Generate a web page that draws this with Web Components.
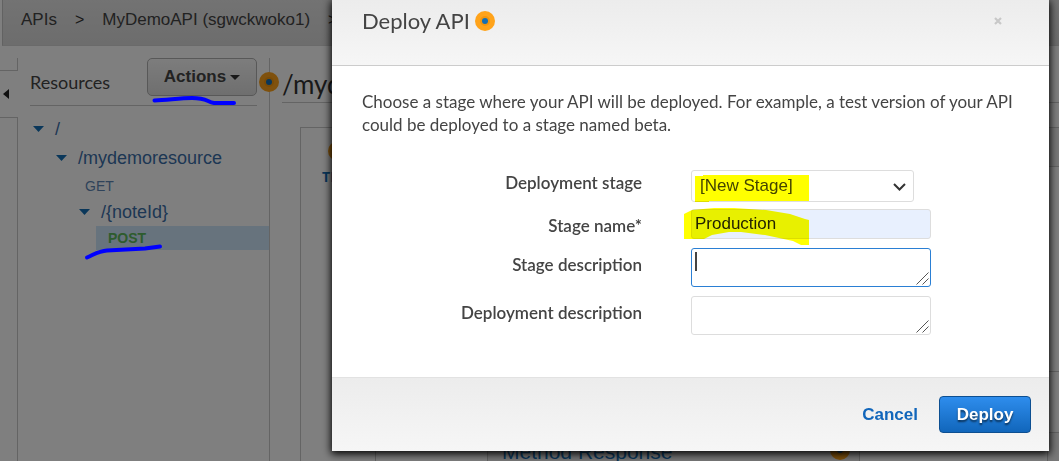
<!DOCTYPE html>
<html lang="en">
<head>
<meta charset="utf-8">
<title>Deploy API</title>
<style>
  html, body { margin: 0; height: 100%; }
  body { overflow: hidden; background: #fff; color: #444; font-family: "Liberation Sans", Arial, sans-serif; }
</style>
</head>
<body>
<api-console></api-console>
<script>
const define = (name, html) => {
  const tpl = document.createElement('template');
  tpl.innerHTML = html;
  customElements.define(name, class extends HTMLElement {
    constructor() {
      super();
      this.attachShadow({ mode: 'open' }).append(tpl.content.cloneNode(true));
    }
  });
};

/* Orange hint dot with a blue core */
define('hint-pulse', `
<style>
  :host { display: inline-block; width: 20px; height: 20px; }
  svg { display: block; }
</style>
<svg width="20" height="20" viewBox="0 0 20 20" aria-hidden="true">
  <circle cx="10" cy="10" r="10" fill="#ffa31a"/>
  <circle cx="10" cy="10" r="5" fill="#f2960f"/>
  <circle cx="10" cy="10" r="3" fill="#146eb4"/>
</svg>`);

define('bread-crumbs', `
<style>
  :host { display: block; }
  nav { display: flex; align-items: center; gap: 18px; height: 46px; box-sizing: border-box;
    margin-left: 2px; padding: 0 0 5px 18px; border-left: 1px solid #c4c4c4; border-bottom: 1px solid #d4d4d4;
    background: linear-gradient(#e6e6e6, #dadada); font-size: 17px; white-space: nowrap; }
  a { color: #444; text-decoration: none; }
  span { font-size: 16px; color: #333; }
</style>
<nav><a href="#apis">APIs</a><span>&gt;</span><a href="#api">MyDemoAPI (sgwckwoko1)</a><span>&gt;</span></nav>`);

define('side-rail', `
<style>
  :host { display: flex; flex-direction: column; width: 18px; flex: none; }
  .top { height: 12px; margin-top: 12px; border: solid #c8c8c8; border-width: 0 1px 1px 0; }
  button { height: 46px; padding: 0 0 0 3px; border: 0; background: none; text-align: left; }
  svg { display: block; }
  .rest { flex: 1; border: solid #c8c8c8; border-width: 1px 1px 0 0; }
</style>
<div class="top"></div>
<button aria-label="Collapse"><svg width="6" height="10" viewBox="0 0 6 10"><path d="M6 0v10L0 5z" fill="#222"/></svg></button>
<div class="rest"></div>`);

/* One line of the resource tree */
define('tree-item', `
<style>
  :host { display: flex; align-items: center; gap: 11px; height: 28px; font-size: 18px; color: #3b6ea8; }
  :host([verb]) { font-size: 14px; height: 24px; color: #5f87b5; }
  :host([selected]) { background: #cfe6fa; color: #5cb85c; font-weight: bold; }
  :host([verb]) svg { display: none; }
</style>
<svg width="11" height="6" viewBox="0 0 11 6" aria-hidden="true"><path d="M0 0h11L5.500 6z" fill="#146eb4"/></svg>
<slot></slot>`);

define('resource-panel', `
<style>
  :host { display: block; width: 239px; flex: none; margin: 12px 0 0 12px; border-right: 1px solid #c8c8c8; }
  header { display: flex; justify-content: space-between; height: 47px; margin-right: 12px; border-bottom: 1px solid #c8c8c8; }
  h2 { margin: 0; font: 18px/48px Lato, sans-serif; color: #444; }
  button { display: flex; align-items: center; justify-content: center; gap: 4px; width: 110px; height: 38px;
    border: 1px solid #b0b0b0; border-radius: 5px; background: linear-gradient(#fafafa, #dedede);
    font: bold 17px "Liberation Sans", sans-serif; color: #444; }
  .tree { padding-top: 9px; }
  .l1 { margin-left: 3px; } .l2 { margin: 1px 0 0 26px; } .l3 { margin-left: 49px; }
  .get { margin: 2px 0 0 55px; } .post { margin-left: 66px; padding-left: 12px; }
</style>
<header><h2>Resources</h2><button>Actions<svg width="10" height="5" viewBox="0 0 10 5"><path d="M0 0h10L5 5z" fill="#333"/></svg></button></header>
<div class="tree">
  <tree-item class="l1">/</tree-item>
  <tree-item class="l2">/mydemoresource</tree-item>
  <tree-item class="get" verb>GET</tree-item>
  <tree-item class="l3">/{noteId}</tree-item>
  <tree-item class="post" verb selected>POST</tree-item>
</div>`);

define('method-panel', `
<style>
  :host { display: flex; flex-direction: column; flex: 1; min-width: 0; position: relative; margin: 12px 0 0 12px; }
  .pin { position: absolute; left: -23px; top: 14px; }
  h1 { margin: 0; height: 44px; border-bottom: 1px solid #c8c8c8; font: 26px/52px Lato, sans-serif; color: #333; }
  .flow { display: grid; grid-template-columns: 76px 1fr; column-gap: 111px; flex: 1; margin: 24px 0 0 18px; }
  .client { border: solid #c8c8c8; border-width: 1px 1px 0; }
  .test { display: flex; flex-direction: column; width: 40px; gap: 6px; margin: 13px 0 0 17px; align-items: center;
    font: bold 14px "Open Sans", sans-serif; color: #146eb4; }
  .cols { display: flex; flex-direction: column; }
  .card { height: 243px; border: solid #c8c8c8; border-width: 1px 0 1px 1px; }
  .bar { height: 38px; background: #f0f0f0; border-bottom: 1px solid #c8c8c8; }
  .row { display: flex; justify-content: space-between; flex: 1; margin-top: 60px; }
  .box { display: flex; justify-content: space-between; width: 373px; box-sizing: border-box; padding: 7px 9px 0 14px; border: solid #c8c8c8; border-width: 1px 1px 0; background: #f0f0f0;
    font-size: 21px; color: #146eb4; }
  .end { width: 11px; border: solid #c8c8c8; border-width: 1px 0 0 1px; background: #f0f0f0; }
</style>
<hint-pulse class="pin"></hint-pulse>
<h1>/myd</h1>
<div class="flow">
  <div class="client"><div class="test"><hint-pulse></hint-pulse><span>TEST</span></div></div>
  <div class="cols">
    <div class="card"><div class="bar"></div></div>
    <div class="row"><div class="box">Method Response<hint-pulse></hint-pulse></div><div class="end"></div></div>
  </div>
</div>`);

define('deploy-dialog', `
<style>
  :host { position: fixed; inset: 0; display: flex; align-items: flex-start; padding: 0 10px 0 332px; background: rgba(0,0,0,.5); }
  section { flex: 1; background: #fff; color: #444; box-shadow: 0 2px 8px 1px #000; font-family: Lato, sans-serif; }
  header { display: flex; align-items: center; gap: 5px; height: 22px; padding: 10px 47px 33px 30px;
    border-bottom: 1px solid #ccc; background: linear-gradient(#ececec, #f6f6f6); }
  h2 { margin: 0; font-size: 22px; line-height: 22px; font-weight: normal; }
  .close { margin-left: auto; padding: 0; border: 0; background: none; height: 22px; }
  .close svg { display: block; }
  p { margin: 0; padding: 24px 30px 34px; font-size: 17px; line-height: 23px; }
  form { display: grid; grid-template-columns: 310px 240px; column-gap: 49px; padding-bottom: 42px; }
  label { text-align: right; font-size: 17px; line-height: 20px; font-weight: 600; padding-top: 3px; }
  .low { padding-top: 7px; }
  .field { position: relative; display: flex; height: 39px; }
  .tall { height: 48px; }
  input, select, textarea { box-sizing: border-box; margin: 0; width: 100%; border: 1px solid #ddd; border-radius: 3px;
    background: #fff; color: #444; font: 17px "Liberation Sans", sans-serif; outline: 0; }
  select { appearance: none; width: 223px; height: 32px; padding: 0 8px 2px; }
  input { height: 30px; padding: 0 3px; background: #e8f0fe; color: #222; }
  textarea { display: block; height: 39px; padding: 4px; resize: none; }
  .active { border-color: #2a7fd4; }
  .field svg { position: absolute; pointer-events: none; }
  .chev { left: 202px; top: 13px; }
  .grip { left: 225px; top: 24px; }
  .mark { mix-blend-mode: multiply; left: -7px; top: -1px; }
  .caret { position: absolute; left: 4px; top: 4px; width: 2px; height: 19px; background: #444; }
  footer { display: flex; justify-content: flex-end; align-items: center; gap: 21px; height: 73px; padding: 0 18px;
    border-top: 1px solid #e2e2e2; background: linear-gradient(#ececec, #f6f6f6); font: bold 17px "Liberation Sans", sans-serif; }
  a { color: #1166bb; text-decoration: none; }
  .deploy { width: 92px; height: 37px; border: 1px solid #0d4f91; border-radius: 4px; padding: 0; color: #fff; font: inherit;
    background: linear-gradient(#2e8ded, #1166bb); text-shadow: 0 2px 2px rgba(0,0,0,.6); }
</style>
<section role="dialog" aria-label="Deploy API">
  <header><h2>Deploy API</h2><hint-pulse></hint-pulse>
    <button class="close" aria-label="Close"><svg width="8" height="8" viewBox="0 0 8 8"><path d="M1 1l6 6M7 1l-6 6" stroke="#c8c8c8" stroke-width="2.200"/></svg></button></header>
  <p>Choose a stage where your API will be deployed. For example, a test version of your API could be deployed to a stage named beta.</p>
  <form>
    <label for="stage">Deployment stage</label>
    <div class="field"><select id="stage"><option>[New Stage]</option></select>
      <svg class="chev" width="13" height="8" viewBox="0 0 13 8"><path d="M1 1l5.500 5.500L12 1" fill="none" stroke="#333" stroke-width="2"/></svg>
      <svg class="mark" width="126" height="38" viewBox="0 0 126 38"><path d="M11 7h8v-1h106v26H25v1H11z" fill="#ff0"/></svg></div>
    <label class="low" for="name">Stage name*</label>
    <div class="field"><input id="name" value="Production">
      <svg class="mark" width="126" height="38" viewBox="0 0 126 38"><path d="M0 6l8-4 22-2h20l32 2 24 4 15 5 4 1v25h-8l-8-4-28-6-24-3H45l-17 3-8 4H0z" fill="#ff0"/></svg></div>
    <label class="low" for="sdesc">Stage description</label>
    <div class="field tall"><textarea id="sdesc" class="active"></textarea><span class="caret"></span>
      <svg class="grip" width="13" height="13" viewBox="0 0 13 13"><path d="M0.500 12.500l12-12M6.500 12.500l6-6" stroke="#555"/></svg></div>
    <label class="low" for="ddesc">Deployment description</label>
    <div class="field"><textarea id="ddesc"></textarea>
      <svg class="grip" width="13" height="13" viewBox="0 0 13 13"><path d="M0.500 12.500l12-12M6.500 12.500l6-6" stroke="#555"/></svg></div>
  </form>
  <footer><a href="#cancel">Cancel</a><button class="deploy">Deploy</button></footer>
</section>`);

/* Freehand blue underlines drawn over the page */
define('ink-layer', `
<style>
  :host { position: absolute; left: 0; top: 0; pointer-events: none; }
  svg { display: block; }
</style>
<svg width="270" height="270" viewBox="0 0 270 270" aria-hidden="true" fill="none" stroke="#00f" stroke-width="4" stroke-linecap="round" stroke-linejoin="round">
  <path d="M154.500 100.500C168 100 180 98 192 98C207 98 207 102 214 103H234"/>
  <path d="M87 257.500C95 254 99 251 107 250.500L145 248.500L160 246.500"/>
</svg>`);

define('api-console', `
<style>
  :host { display: flex; flex-direction: column; height: 100vh; }
  main { display: flex; flex: 1; min-height: 0; }
</style>
<bread-crumbs></bread-crumbs>
<main><side-rail></side-rail><resource-panel></resource-panel><method-panel></method-panel></main>
<deploy-dialog></deploy-dialog>
<ink-layer></ink-layer>`);
</script>
</body>
</html>
